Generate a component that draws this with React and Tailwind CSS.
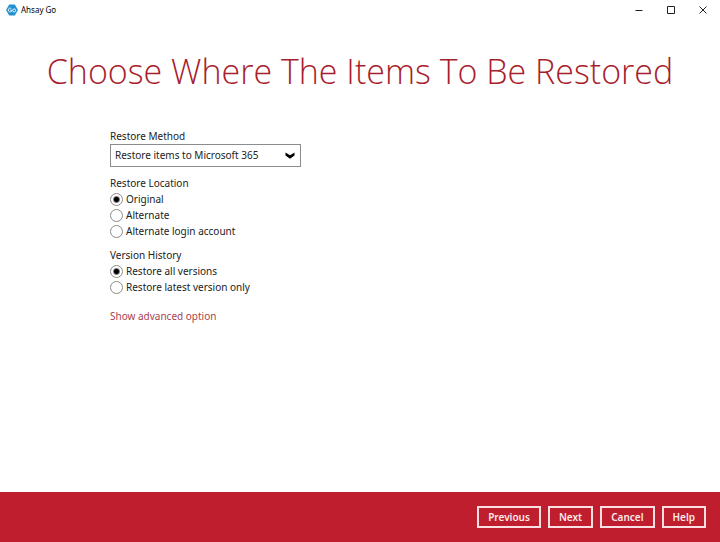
import React, { useState } from 'react';

const footerButtons = ['Previous', 'Next', 'Cancel', 'Help'];

const restoreMethods = ['Restore items to Microsoft 365', 'Restore items to local machine'];
const restoreLocations = ['Original', 'Alternate', 'Alternate login account'];
const versionHistory = ['Restore all versions', 'Restore latest version only'];

const RadioGroup = ({ name, legend, options, value, onChange }) => (
  <fieldset>
    <legend className="leading-4">{legend}</legend>
    {options.map((option) => (
      <label key={option} className="flex h-4 w-fit items-center gap-[3px]">
        <input
          type="radio"
          name={name}
          checked={value === option}
          onChange={() => onChange(option)}
          className="size-[13px] shrink-0 appearance-none rounded-full border border-[#8c8c8c] bg-white checked:bg-[radial-gradient(circle,#000_2px,#fff_4px)]"
        />
        <span>{option}</span>
      </label>
    ))}
  </fieldset>
);

const TitleBar = () => (
  <header className="flex h-5 items-center justify-between pl-1.5 pr-px">
    <div className="flex items-center gap-[3px] text-[8px] text-black">
      <svg viewBox="0 0 12 12" className="size-3" aria-hidden="true">
        <path d="M3.2 0.5h5.6L12 6l-3.2 5.5H3.2L0 6z" fill="#2390cf" />
        <path
          d="M5.3 4.6C4.1 3.6 2.2 4.3 2.2 6s2 2.4 3.3 1.4V6.1H4.2"
          fill="none"
          stroke="#fff"
          strokeWidth="0.9"
        />
        <circle cx="8.2" cy="6.4" r="1.5" fill="none" stroke="#fff" strokeWidth="0.9" />
      </svg>
      <span>Ahsay Go</span>
    </div>
    <div className="flex text-[#222]">
      <button aria-label="Minimize" className="flex h-5 w-8 items-center justify-center">
        <svg viewBox="0 0 8 8" className="size-2" stroke="currentColor" fill="none">
          <path d="M0.5 4.5h7" />
        </svg>
      </button>
      <button aria-label="Maximize" className="flex h-5 w-8 items-center justify-center">
        <svg viewBox="0 0 8 8" className="size-2" stroke="currentColor" fill="none">
          <path d="M0.5 0.5h7v7h-7z" />
        </svg>
      </button>
      <button aria-label="Close" className="flex h-5 w-8 items-center justify-center">
        <svg viewBox="0 0 8 8" className="size-2" stroke="currentColor" fill="none">
          <path d="M0.5 0.5l7 7M7.5 0.5l-7 7" />
        </svg>
      </button>
    </div>
  </header>
);

export default function App() {
  const [method, setMethod] = useState(restoreMethods[0]);
  const [location, setLocation] = useState('Original');
  const [version, setVersion] = useState('Restore all versions');

  return (
    <div className="flex min-h-screen flex-col bg-white font-['Noto_Sans',sans-serif] text-[10px] text-[#222]">
      <TitleBar />
      <main className="flex-1">
        <h1 className="mt-6 text-center font-['Open_Sans',sans-serif] text-[34px] font-light leading-[54px] text-[#a81e2d]">
          Choose Where The Items To Be Restored
        </h1>
        <div className="ml-[110px] mt-[30px] flex flex-col items-start gap-2">
          <div>
            <label htmlFor="method" className="block leading-4">
              Restore Method
            </label>
            <div className="relative w-[191px]">
              <select
                id="method"
                value={method}
                onChange={(e) => setMethod(e.target.value)}
                className="block h-[23px] w-full appearance-none border border-[#8c8c8c] bg-white pl-1"
              >
                {restoreMethods.map((item) => (
                  <option key={item}>{item}</option>
                ))}
              </select>
              <svg
                viewBox="0 0 10 7"
                className="pointer-events-none absolute right-1.5 top-2 h-[7px] w-2.5"
                aria-hidden="true"
              >
                <path d="M0.5 0.5L5 3.2 9.5 0.5V3.6L5 6.8 0.5 3.6z" fill="#000" />
              </svg>
            </div>
          </div>
          <RadioGroup
            name="location"
            legend="Restore Location"
            options={restoreLocations}
            value={location}
            onChange={setLocation}
          />
          <RadioGroup
            name="version"
            legend="Version History"
            options={versionHistory}
            value={version}
            onChange={setVersion}
          />
          <a href="#advanced" className="mt-[5px] leading-4 text-[#a84450]">
            Show advanced option
          </a>
        </div>
      </main>
      <footer className="flex h-[50px] items-center justify-end gap-[7px] bg-[#be1e2d] pr-3.5">
        {footerButtons.map((label) => (
          <button
            key={label}
            className="h-[22px] border-2 border-[#fbdfe2] px-[9px] font-semibold text-[#fdeaec]"
          >
            {label}
          </button>
        ))}
      </footer>
    </div>
  );
}
